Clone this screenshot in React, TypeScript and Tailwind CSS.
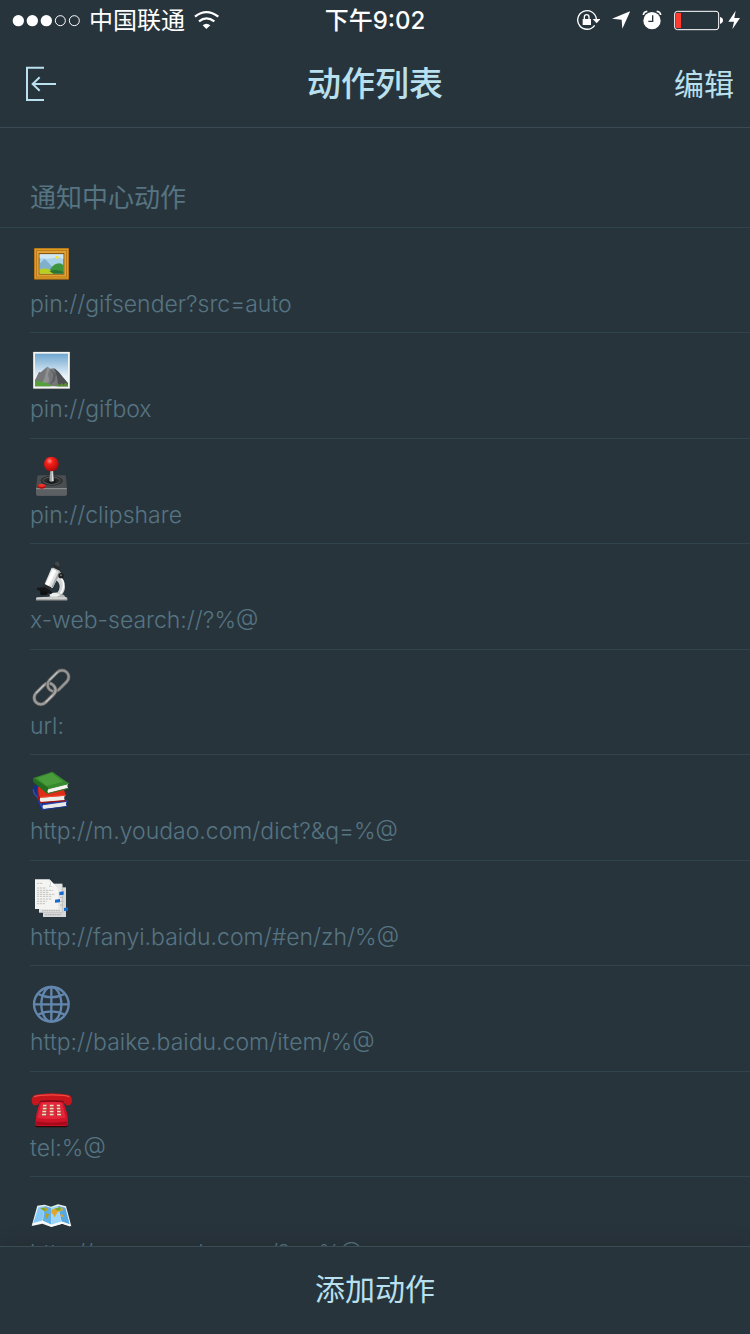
import type { ReactNode } from "react";

const iconClass = "block h-[42px] w-[42px]";

function FramedPicture() {
  return (
    <svg viewBox="30 27 126 126" className={iconClass} aria-hidden="true">
      <rect x="42" y="39" width="105" height="95" rx="2" fill="#a86a12" />
      <rect x="44" y="41" width="101" height="90" fill="#dc9c2a" />
      <rect x="48" y="45" width="93" height="82" fill="#c07c18" />
      <rect x="51" y="48" width="87" height="76" fill="#dfa236" />
      <rect x="56" y="54" width="77" height="65" fill="#8a5a14" />
      <rect x="59" y="58" width="71" height="58" fill="#a9d3ea" />
      <path d="M59 58h71v14q-14-8-30-3t-41 0z" fill="#cfe7f2" />
      <path d="M59 86l15-15 24 26-10 12H59z" fill="#7fb0cc" />
      <circle cx="111" cy="67" r="5" fill="#f6e23a" />
      <path d="M90 104q12-19 27-19 8 0 13 6v23H96z" fill="#3f9440" />
      <path d="M59 104q18-8 36 4 8 4 10 8H59z" fill="#b9cf1f" />
      <path d="M88 108q20-7 42 2v6H100z" fill="#2a7434" />
    </svg>
  );
}

function MountainPicture() {
  return (
    <svg viewBox="30 27 126 126" className={iconClass} aria-hidden="true">
      <defs>
        <linearGradient id="mountain-sky" x1="0" y1="0" x2="0" y2="1">
          <stop offset="0" stopColor="#6fa6cf" />
          <stop offset=".7" stopColor="#e8f3fa" />
        </linearGradient>
      </defs>
      <rect x="39" y="35" width="111" height="112" rx="2" fill="#8c8f8d" />
      <rect x="40" y="36" width="109" height="109" fill="#f4f4f0" />
      <rect x="45" y="41" width="99" height="98" fill="url(#mountain-sky)" />
      <path d="M45 120l12-24 5 1 20-17 8 6 13-1 13 11 14 17 14 17v9H45z" fill="#75777a" />
      <path d="M82 80l8 6-6 17 4 20-15 16-10-2 10-22z" fill="#8f9092" />
      <path d="M103 85l13 11 14 17 14 17v9h-30l-2-25z" fill="#4d4f52" />
      <path d="M90 88l10 14-3 18-10 17 18-15 3-21z" fill="#5e6063" />
      <path d="M45 120l6 5 4-6 5 8 6-5 5 8 7-4 4 7 8-2 3 8H45z" fill="#55a03a" />
      <path d="M106 139l8-9 5 5 6-6 5 5 7-6 7 5v6z" fill="#5a8a36" />
    </svg>
  );
}

function Joystick() {
  return (
    <svg viewBox="30 30 126 126" className={iconClass} aria-hidden="true">
      <defs>
        <radialGradient id="stick-ball" cx=".38" cy=".3" r=".75">
          <stop offset="0" stopColor="#ff8d83" />
          <stop offset=".3" stopColor="#f5201a" />
          <stop offset="1" stopColor="#a80706" />
        </radialGradient>
      </defs>
      <path d="M55 91h79q3 0 4 5l3 34v17q0 5-6 5H54q-6 0-6-5v-17l4-34q1-5 3-5z" fill="#4b4e50" />
      <path d="M48 130h93v17q0 5-6 5H54q-6 0-6-5z" fill="#5d6062" />
      <path d="M49 131h91" stroke="#97999a" strokeWidth="3" />
      <ellipse cx="95" cy="107" rx="33" ry="15" fill="#2a2c2e" />
      <ellipse cx="95" cy="107" rx="26" ry="11" fill="none" stroke="#55585a" strokeWidth="3" />
      <ellipse cx="95" cy="109" rx="14" ry="7" fill="#191b1c" />
      <path d="M91 74h8l3 34q-7 5-14 0z" fill="#a2a5a6" />
      <path d="M95 76h3l2 32h-4z" fill="#dcdede" />
      <circle cx="94" cy="57" r="22" fill="url(#stick-ball)" />
      <ellipse cx="65" cy="124" rx="11" ry="7" fill="#b60c0b" />
      <ellipse cx="65" cy="121" rx="10" ry="5" fill="#f0342c" />
    </svg>
  );
}

function Microscope() {
  return (
    <svg viewBox="30 24 126 126" className={iconClass} aria-hidden="true">
      <path d="M117 72q18 8 18 32 0 22-23 34l-25-3q32-8 32-31 0-12-11-20z" fill="#d3d5d5" />
      <path d="M124 79q8 10 6 26-3 18-18 28" fill="none" stroke="#fff" strokeWidth="4" />
      <path d="M48 137q20-3 40-3l8-10 14-3 22 8 4 6q6 0 6 2v8H48z" fill="#b0b3b2" />
      <path d="M88 128l12-6 14 2 8 5-12 5H92z" fill="#eceeed" />
      <path d="M50 138h88" stroke="#e9ebea" strokeWidth="3" />
      <path d="M48 145h93" stroke="#666a69" strokeWidth="3" />
      <path d="M95 47l27 14-24 47q-15 0-24-12z" fill="#dfe1e1" />
      <path d="M99 51l10 5-23 46-9-6z" fill="#fff" />
      <path d="M116 59l6 2-24 46-4-2z" fill="#a5a8a8" />
      <path d="M103 38l16 8-3 12-18-9z" fill="#27292a" />
      <path d="M106 31q6-4 12 2l-1 11-12-6z" fill="#43484a" />
      <path d="M98 48l21 11" stroke="#c9cbcb" strokeWidth="4" />
      <circle cx="123" cy="71" r="8" fill="#1b1d1e" />
      <circle cx="123" cy="70" r="3" fill="#6c7072" />
      <path d="M74 97l20 9-6 7-18-7z" fill="#292b2c" />
      <path d="M50 107l24-1 23 14-3 5-24-5-18-6z" fill="#151718" />
      <path d="M61 116l22 4-2 9H61z" fill="#0d0f10" />
    </svg>
  );
}

function ChainLink() {
  return (
    <svg viewBox="30 18 126 126" className={iconClass} aria-hidden="true">
      <g fill="none" transform="rotate(-45 95 82)">
        <rect x="30" y="61" width="73" height="40" rx="20" stroke="#5c5d5d" strokeWidth="11" />
        <rect x="30" y="61" width="73" height="40" rx="20" stroke="#9b9b9a" strokeWidth="7" />
        <rect x="86" y="62" width="73" height="40" rx="20" stroke="#555656" strokeWidth="11" />
        <rect x="86" y="62" width="73" height="40" rx="20" stroke="#969695" strokeWidth="7" />
        <path d="M60 101h23q20 0 20-20" stroke="#555656" strokeWidth="11" />
        <path d="M60 101h23q20 0 20-20" stroke="#a3a3a2" strokeWidth="7" />
        <path d="M50 61h33M106 62h34M51 101h28" stroke="#c9c9c8" strokeWidth="3" />
      </g>
    </svg>
  );
}

function Books() {
  return (
    <svg viewBox="30 27 126 126" className={iconClass} aria-hidden="true">
      <path d="M40 78q1-8 10-9l92 50v14l-71 11q-12-3-15-17z" fill="#142e8c" />
      <path d="M40 82q0 13 12 23l18 38" fill="none" stroke="#3152b0" strokeWidth="4" />
      <path d="M69 128l71-10q-4 7 0 15l-69 8q-6-6-2-13z" fill="#e9e9e7" />
      <path d="M68 128l75-11" stroke="#2446a9" strokeWidth="4" />
      <path d="M71 143l72-10" stroke="#193583" strokeWidth="3" />
      <path d="M54 75l77 5 7 22-78 6q-7-10-6-33z" fill="#df2c19" />
      <path d="M60 107l74-6q-3 7 0 14l-73 7q-4-8-1-15z" fill="#eeeeeb" />
      <path d="M53 79q-1 30 8 43l77-6" fill="none" stroke="#a51208" strokeWidth="4" />
      <path d="M60 106l77-6" stroke="#f34c31" strokeWidth="3" />
      <path d="M40 48l57-19 49 35-63 16z" fill="#37892d" />
      <path d="M51 48l44-15 35 26-50 13z" fill="#489d3a" />
      <path d="M39 47q-2 12 5 17l38 32 5-17z" fill="#236c20" />
      <path d="M86 80l58-15q-4 7 0 13L84 93q-4-7 2-13z" fill="#f3f3ef" />
      <path d="M83 95l63-16" stroke="#2c7b28" strokeWidth="3" />
      <path d="M84 80l63-16" stroke="#398c31" strokeWidth="4" />
    </svg>
  );
}

function Documents() {
  return (
    <svg viewBox="30 21 126 126" className={iconClass} aria-hidden="true">
      <path d="M69 52h69v89H69z" fill="#d6d7d6" />
      <path d="M57 41h70v87H57z" fill="#e5e5e4" />
      <path d="M127 44v83H60" fill="none" stroke="#b6b7b6" strokeWidth="2" />
      <path d="M45 28h43l27 29v60H45z" fill="#f4f4f2" />
      <path d="M88 28q5 14-1 23 15-4 28 6z" fill="#bfc1c0" />
      <path d="M88 28q7 13 3 21 11-2 24 8z" fill="#fff" />
      <path d="M51 40h18M51 54h28M51 61h48M51 67h36M51 73h53M51 79h43M51 87h45M51 94h29M51 101h24" stroke="#a9aaa9" strokeWidth="2" strokeDasharray="7 2" />
      <path d="M66 122h54M76 134h49M120 82h9M121 94h9M120 105h9" stroke="#969898" strokeWidth="2" strokeDasharray="5 2" />
      <path d="M118 66l13-2v10l-13 2zM105 89l15-2v10l-15 1zM132 114l12-2v10l-12 1z" fill="#176bd0" />
    </svg>
  );
}

function Globe() {
  return (
    <svg viewBox="30 21 126 126" className={iconClass} aria-hidden="true">
      <g fill="none" stroke="#6286ad" strokeWidth="7">
        <circle cx="94" cy="88" r="52" />
        <ellipse cx="94" cy="88" rx="30" ry="52" />
        <path d="M94 36v104M42 88h104M54 57q40 20 80 0M54 119q40-20 80 0" />
      </g>
    </svg>
  );
}

function Telephone() {
  return (
    <svg viewBox="30 24 126 126" className={iconClass} aria-hidden="true">
      <path d="M50 137h88q5-1 5-6v6q0 5-6 5H52q-6 0-6-5z" fill="#2b0808" />
      <path d="M62 62h65q8 15 15 42l2 28q0 6-7 6H52q-7 0-6-6l3-28q5-26 13-42z" fill="#cf1429" />
      <path d="M64 65h61l12 48q-41 8-85 0z" fill="#e4253a" />
      <path d="M48 124q46 8 94 0v8q0 4-6 4H53q-6 0-5-4z" fill="#a70a1c" />
      <path d="M35 60q0-12 12-16 48-9 97 0 12 4 12 16 0 12-8 16-15 1-18-14H60Q57 77 42 76q-7-4-7-16z" fill="#c5161d" />
      <path d="M42 51q6-4 20-5 36-3 68 0 14 1 18 5" fill="none" stroke="#ee4a42" strokeWidth="4" />
      <path d="M61 65q33-4 68 0" fill="none" stroke="#850615" strokeWidth="4" />
      <path d="M69 78h12M89 78h12M109 78h11M68 87h13M89 87h12M109 87h12M67 96h13M89 96h12M110 96h12M66 105h14M89 105h12M110 105h13" stroke="#7e0d19" strokeWidth="6" />
      <path d="M69 77h11M89 77h12M110 77h10M68 86h12M89 86h12M110 86h11M67 95h12M89 95h12M111 95h11M66 104h13M89 104h12M111 104h12" stroke="#f4dfbd" strokeWidth="5" />
    </svg>
  );
}

function WorldMap() {
  return (
    <svg viewBox="90 69 126 126" className={iconClass} aria-hidden="true">
      <path d="M112 107l22-3 19 6 21-7 24 6 16 60-27-8-33 10-27-10-32 7z" fill="#edf3f5" />
      <path d="M115 112l19-4-7 47-28 7z" fill="#86c9f6" />
      <path d="M134 108l19 5 1 54-26-11z" fill="#5fb1e9" />
      <path d="M153 113l21-6 10 48-30 9z" fill="#9bd6fa" />
      <path d="M174 107l22 6 13 50-24-8z" fill="#58a7df" />
      <path d="M120 115l16-3 8 6-8 8-7-5zM136 129l11 4-5 13-6-3z" fill="#ba9f22" />
      <path d="M155 119l14-5 17-2 3 9-15 4-5 8-5 9-5-9-6-5zM180 133l8 1 3 7-7-1z" fill="#e2a72a" />
      <path d="M164 116l15-4 5 6-11 5zM123 115l8-1 6 5-6 2z" fill="#71a735" />
      <path d="M99 163l28-8 27 12 31-9 26 9" fill="none" stroke="#f7fafb" strokeWidth="6" />
    </svg>
  );
}

const actions: { icon: ReactNode; url: string }[] = [
  { icon: <FramedPicture />, url: "pin://gifsender?src=auto" },
  { icon: <MountainPicture />, url: "pin://gifbox" },
  { icon: <Joystick />, url: "pin://clipshare" },
  { icon: <Microscope />, url: "x-web-search://?%@" },
  { icon: <ChainLink />, url: "url:" },
  { icon: <Books />, url: "http://m.youdao.com/dict?&q=%@" },
  { icon: <Documents />, url: "http://fanyi.baidu.com/#en/zh/%@" },
  { icon: <Globe />, url: "http://baike.baidu.com/item/%@" },
  { icon: <Telephone />, url: "tel:%@" },
  { icon: <WorldMap />, url: "http://maps.apple.com/?q=%@" },
];

function StatusBar() {
  return (
    <div className="grid h-10 grid-cols-[1fr_auto_1fr] items-center text-2xl text-white">
      <div className="flex items-center gap-2 pl-3">
        <svg viewBox="36 42 207 39" className="h-[13px] w-[69px]" aria-hidden="true">
          <g fill="#fff">
            <circle cx="55" cy="62" r="17" />
            <circle cx="97" cy="62" r="17" />
            <circle cx="139" cy="62" r="17" />
          </g>
          <g fill="none" stroke="#fff" strokeWidth="3">
            <circle cx="181" cy="62" r="15" />
            <circle cx="223" cy="62" r="15" />
          </g>
        </svg>
        <span className="pt-[2px]">中国联通</span>
        <svg viewBox="579 30 81 60" className="h-5 w-[27px]" aria-hidden="true">
          <path d="M619 87l-11-11q11-9 23 0z" fill="#fff" />
          <g fill="none" stroke="#fff" strokeWidth="7">
            <path d="M585 50q34-27 70 0" />
            <path d="M597 64q22-18 46 0" />
          </g>
        </svg>
      </div>
      <span className="pt-[2px] font-medium">下午9:02</span>
      <div className="flex items-center justify-end gap-3 pr-[10px]">
        <svg viewBox="48 27 72 66" className="h-[22px] w-6" aria-hidden="true">
          <path d="M104 76A28 28 0 1 1 109 57" fill="none" stroke="#fff" strokeWidth="4" />
          <path d="M98 57h23l-11 13z" fill="#fff" />
          <path d="M68 57h25v18H68z" fill="#fff" />
          <path d="M73 58v-7q0-7 7-7t7 7v7" fill="none" stroke="#fff" strokeWidth="4" />
        </svg>
        <svg viewBox="156 33 54 60" className="h-5 w-[18px]" aria-hidden="true">
          <path d="M211 36l-24 53-2-27-29-3z" fill="#fff" />
        </svg>
        <svg viewBox="247 30 60 60" className="h-5 w-5" aria-hidden="true">
          <circle cx="277" cy="62" r="26" fill="#fff" />
          <path d="M251 45q1-10 12-11M303 45q-1-10-12-11" fill="none" stroke="#fff" strokeWidth="5" />
          <path d="M279 46v18h-13" fill="none" stroke="#28343c" strokeWidth="4" />
        </svg>
        <div className="flex items-center gap-1">
          <svg viewBox="342 30 150 63" className="h-[21px] w-[50px]" aria-hidden="true">
            <rect x="344" y="34" width="132" height="55" rx="8" fill="none" stroke="#fff" strokeWidth="3" />
            <path d="M347 42q0-3 3-3h13v45h-13q-3 0-3-3z" fill="#ff3b30" />
            <path d="M480 51q9 2 9 10t-9 11z" fill="#fff" />
          </svg>
          <svg viewBox="504 30 36 60" className="h-5 w-3" aria-hidden="true">
            <path d="M527 32l-22 33h17l-5 23 23-34h-17z" fill="#fff" />
          </svg>
        </div>
      </div>
    </div>
  );
}

export default function App() {
  return (
    <div className="flex h-screen flex-col bg-[#28343c] font-['Inter','Noto_Sans_CJK_SC',sans-serif]">
      <header className="shrink-0 border-b border-[#3a4b56]">
        <StatusBar />
        <nav className="grid h-[87px] grid-cols-[1fr_auto_1fr] items-center px-4 text-[#b9e0ef]">
          <button type="button" aria-label="返回" className="justify-self-start px-2">
            <svg viewBox="72 198 96 108" className="block h-9 w-8" fill="none" stroke="currentColor" strokeWidth="6" aria-hidden="true">
              <path d="M132 203H81v97h51M168 252H98M119 232l-21 20 21 20" />
            </svg>
          </button>
          <h1 className="text-[34px] font-medium">动作列表</h1>
          <button type="button" className="justify-self-end text-3xl">编辑</button>
        </nav>
      </header>

      <main className="min-h-0 flex-1 overflow-hidden">
        <h2 className="flex h-[100px] items-end border-b border-[#31434d] px-[30px] pb-[10px] text-[26px] font-normal text-[#567482]">
          通知中心动作
        </h2>
        <ul className="pl-[30px]">
          {actions.map((action) => (
            <li key={action.url} className="border-b border-[#31434d] pt-4 odd:h-[105px] even:h-[106px]">
              {action.icon}
              <p className="mt-1 text-[23px] leading-7 font-light text-[#567482]">{action.url}</p>
            </li>
          ))}
        </ul>
      </main>

      <footer className="z-10 shrink-0 border-t border-[#3a4b56] bg-[#28343c] shadow-[0_0_20px_rgba(0,0,0,0.2)]">
        <button type="button" className="h-[87px] w-full pb-1 text-3xl text-[#b9e0ef]">
          添加动作
        </button>
      </footer>
    </div>
  );
}
